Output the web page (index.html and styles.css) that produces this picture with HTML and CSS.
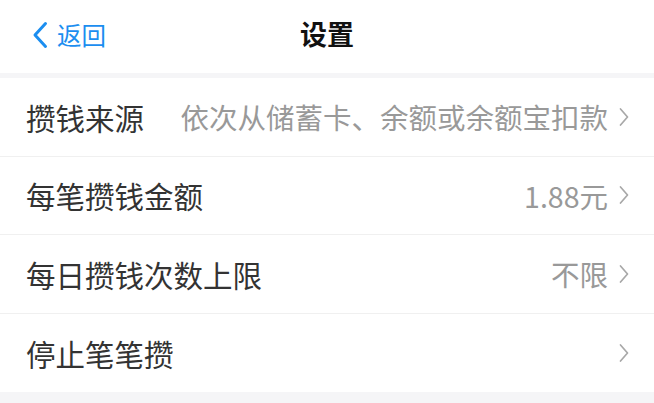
FILE: index.html
```html
<!DOCTYPE html>
<html lang="zh-CN">
<head>
<meta charset="utf-8">
<title>设置</title>
<link rel="stylesheet" href="styles.css">
</head>
<body>
<div class="page">
  <header class="navbar">
    <a class="back">
      <svg class="back-icon" viewBox="0 0 16 28" width="16" height="28"><path d="M13.5 2.5 L3 14 L13.5 25.5" fill="none" stroke="#1b8ef0" stroke-width="3" stroke-linecap="round" stroke-linejoin="round"/></svg>
      <span>返回</span>
    </a>
    <h1 class="title">设置</h1>
  </header>
  <ul class="list">
    <li class="row">
      <span class="label">攒钱来源</span>
      <span class="value">依次从储蓄卡、余额或余额宝扣款</span>
      <svg class="chev" viewBox="0 0 12 20" width="12" height="20"><path d="M2.5 2 L9.5 10 L2.5 18" fill="none" stroke="#a8a8a8" stroke-width="1.7" stroke-linecap="round" stroke-linejoin="round"/></svg>
    </li>
    <li class="row">
      <span class="label">每笔攒钱金额</span>
      <span class="value">1.88元</span>
      <svg class="chev" viewBox="0 0 12 20" width="12" height="20"><path d="M2.5 2 L9.5 10 L2.5 18" fill="none" stroke="#a8a8a8" stroke-width="1.7" stroke-linecap="round" stroke-linejoin="round"/></svg>
    </li>
    <li class="row">
      <span class="label">每日攒钱次数上限</span>
      <span class="value">不限</span>
      <svg class="chev" viewBox="0 0 12 20" width="12" height="20"><path d="M2.5 2 L9.5 10 L2.5 18" fill="none" stroke="#a8a8a8" stroke-width="1.7" stroke-linecap="round" stroke-linejoin="round"/></svg>
    </li>
    <li class="row">
      <span class="label">停止笔笔攒</span>
      <span class="value"></span>
      <svg class="chev" viewBox="0 0 12 20" width="12" height="20"><path d="M2.5 2 L9.5 10 L2.5 18" fill="none" stroke="#a8a8a8" stroke-width="1.7" stroke-linecap="round" stroke-linejoin="round"/></svg>
    </li>
  </ul>
</div>
</body>
</html>
```
FILE: styles.css
```css
html, body {
  margin: 0;
  padding: 0;
  background: #f5f5f7;
}
body {
  font-family: "Noto Sans CJK SC", "Noto Sans", sans-serif;
}
.page {
  width: 654px;
  height: 403px;
  overflow: hidden;
  background: #f5f5f7;
}
.navbar {
  position: relative;
  height: 73px;
  background: #fff;
  display: flex;
  align-items: center;
  justify-content: center;
}
.back {
  position: absolute;
  left: 32px;
  top: 0;
  height: 73px;
  display: flex;
  align-items: center;
  gap: 9px;
  color: #1b8ef0;
  font-size: 24.5px;
}
.back-icon {
  display: block;
  margin-top: -4px;
}
.back span {
  margin-top: -4px;
}
.title {
  margin: -6px 0 0 0;
  font-size: 27px;
  font-weight: 700;
  color: #111;
}
.list {
  list-style: none;
  margin: 5px 0 0 0;
  padding: 0;
  background: #fff;
}
.row {
  height: 77.5px;
  display: flex;
  align-items: center;
  padding: 0 24px 0 26px;
  border-bottom: 1px solid #f0f0f0;
}
.row:last-child {
  border-bottom: none;
  height: 78.5px;
}
.label {
  font-size: 29.5px;
  color: #333;
  white-space: nowrap;
}
.value {
  flex: 1;
  text-align: right;
  font-size: 28.5px;
  color: #999;
  white-space: nowrap;
  margin-right: 10px;
}
.chev {
  display: block;
  flex: none;
}
```
